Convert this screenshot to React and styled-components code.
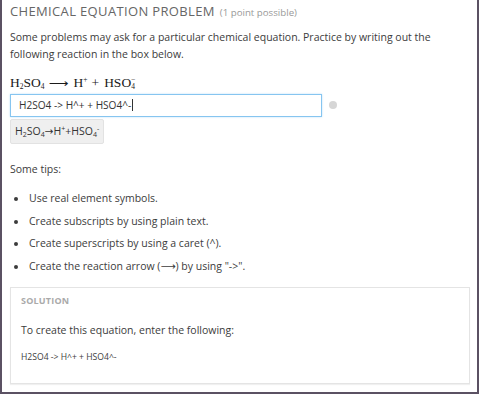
import React from "react";
import styled, { createGlobalStyle } from "styled-components";

const Global = createGlobalStyle`
  html, body { margin: 0; padding: 0; background: #fff; }
  body { font-family: "Open Sans", "DejaVu Sans", sans-serif; }
`;

const Frame = styled.div`
  box-sizing: border-box;
  width: 479px;
  height: 394px;
  border: 2px solid #5b5163;
  border-top: none;
  padding: 1px 7px 0 8px;
  color: #3c3c3c;
  overflow: hidden;
`;

const Title = styled.h2`
  margin: 0;
  font-size: 13px;
  font-weight: 400;
  letter-spacing: 0.35px;
  color: #666;
  line-height: 20px;
`;

const Points = styled.span`
  font-size: 9.7px;
  letter-spacing: 0;
  color: #999;
  margin-left: 5px;
`;

const Para = styled.p`
  margin: ${(p) => p.$m || "5.5px 0 0"};
  font-size: 10.5px;
  line-height: 17px;
`;

const Equation = styled.div`
  margin-top: 12.5px;
  height: 16px;
  font-family: "Liberation Serif", "DejaVu Serif", serif;
  font-size: 13.5px;
  line-height: 16px;
  color: #1a1a1a;
  white-space: nowrap;
  sub, sup { font-size: 7.5px; line-height: 0; }
  sub { vertical-align: -2px; }
  sup { vertical-align: 5px; }
`;

const Term = styled.span`
  margin-right: ${(p) => p.$gap || 4}px;
`;

const Charge = styled.sup`
  margin-left: -4px;
`;

const Arrow = styled.span`
  display: inline-block;
  margin-right: 5px;
  font-family: "DejaVu Sans", sans-serif;
  font-size: 11px;
  transform: scaleX(1.25);
  transform-origin: left;
  width: 20px;
`;

const InputRow = styled.div`
  display: flex;
  align-items: center;
  gap: 7px;
  margin-top: 2.5px;
`;

const Input = styled.div`
  box-sizing: border-box;
  width: 312px;
  height: 23px;
  border: 1px solid #86c5f0;
  box-shadow: 0 0 2px #bfe1f8;
  padding: 0 8px;
  font-size: 10.1px;
  line-height: 21px;
  color: #333;
  display: flex;
  align-items: center;
  white-space: pre;
`;

const Caret = styled.span`
  display: inline-block;
  width: 1px;
  height: 12px;
  background: #333;
  margin-left: 1px;
`;

const Dot = styled.span`
  width: 8px;
  height: 8px;
  border-radius: 50%;
  background: #d6d6d6;
`;

const Preview = styled.div`
  display: inline-block;
  box-sizing: border-box;
  height: 25px;
  margin-top: 2px;
  padding: 4px 4px;
  background: #efefef;
  border: 1px solid #e2e2e2;
  border-radius: 2px;
  font-size: 10.5px;
  line-height: 15px;
  color: #333;
  sub, sup { font-size: 7px; line-height: 0; }
  sub { vertical-align: -2px; }
  sup { vertical-align: 4px; }
`;

const Block = styled.div`
  height: 25px;
`;

const Tips = styled.ul`
  margin: 12px 0 0;
  padding-left: 18px;
  font-size: 10.5px;
  li {
    line-height: 17px;
    padding-left: 1px;
  }
  li + li {
    margin-top: 5.7px;
  }
`;

const Solution = styled.div`
  box-sizing: border-box;
  margin-top: 12px;
  width: 460px;
  height: 97px;
  border: 1px solid #e4e4e4;
  box-shadow: 0 1px 1px #f0f0f0;
  padding: 7px 10px;
`;

const SolHead = styled.div`
  font-size: 9px;
  font-weight: 700;
  color: #aaa;
  line-height: 12px;
  letter-spacing: 0.2px;
`;

const SolText = styled.p`
  margin: ${(p) => p.$m};
  font-size: ${(p) => p.$size || 10.5}px;
  line-height: 15px;
`;

export default function App() {
  return (
    <>
      <Global />
      <Frame>
        <Title>
          CHEMICAL EQUATION PROBLEM<Points>(1 point possible)</Points>
        </Title>
        <Para>
          Some problems may ask for a particular chemical equation. Practice by writing out the
          following reaction in the box below.
        </Para>
        <Equation>
          <Term>
            H<sub>2</sub>SO<sub>4</sub>
          </Term>
          <Arrow>⟶</Arrow>
          <Term $gap={4}>
            H<sup>+</sup>
          </Term>
          <Term $gap={5}>+</Term>
          <Term>
            HSO<sub>4</sub>
            <Charge>−</Charge>
          </Term>
        </Equation>
        <InputRow>
          <Input>
            H2SO4 -&gt; H^+ + HSO4^-
            <Caret />
          </Input>
          <Dot />
        </InputRow>
        <Block>
          <Preview>
            H<sub>2</sub>SO<sub>4</sub>→H<sup>+</sup>+HSO<sub>4</sub>
            <sup>-</sup>
          </Preview>
        </Block>
        <Para $m="19.4px 0 0">Some tips:</Para>
        <Tips>
          <li>Use real element symbols.</li>
          <li>Create subscripts by using plain text.</li>
          <li>Create superscripts by using a caret (^).</li>
          <li>Create the reaction arrow (⟶) by using "-&gt;".</li>
        </Tips>
        <Solution>
          <SolHead>SOLUTION</SolHead>
          <SolText $m="16px 0 0">To create this equation, enter the following:</SolText>
          <SolText $m="12px 0 0" $size={8.6}>
            H2SO4 -&gt; H^+ + HSO4^-
          </SolText>
        </Solution>
      </Frame>
    </>
  );
}
